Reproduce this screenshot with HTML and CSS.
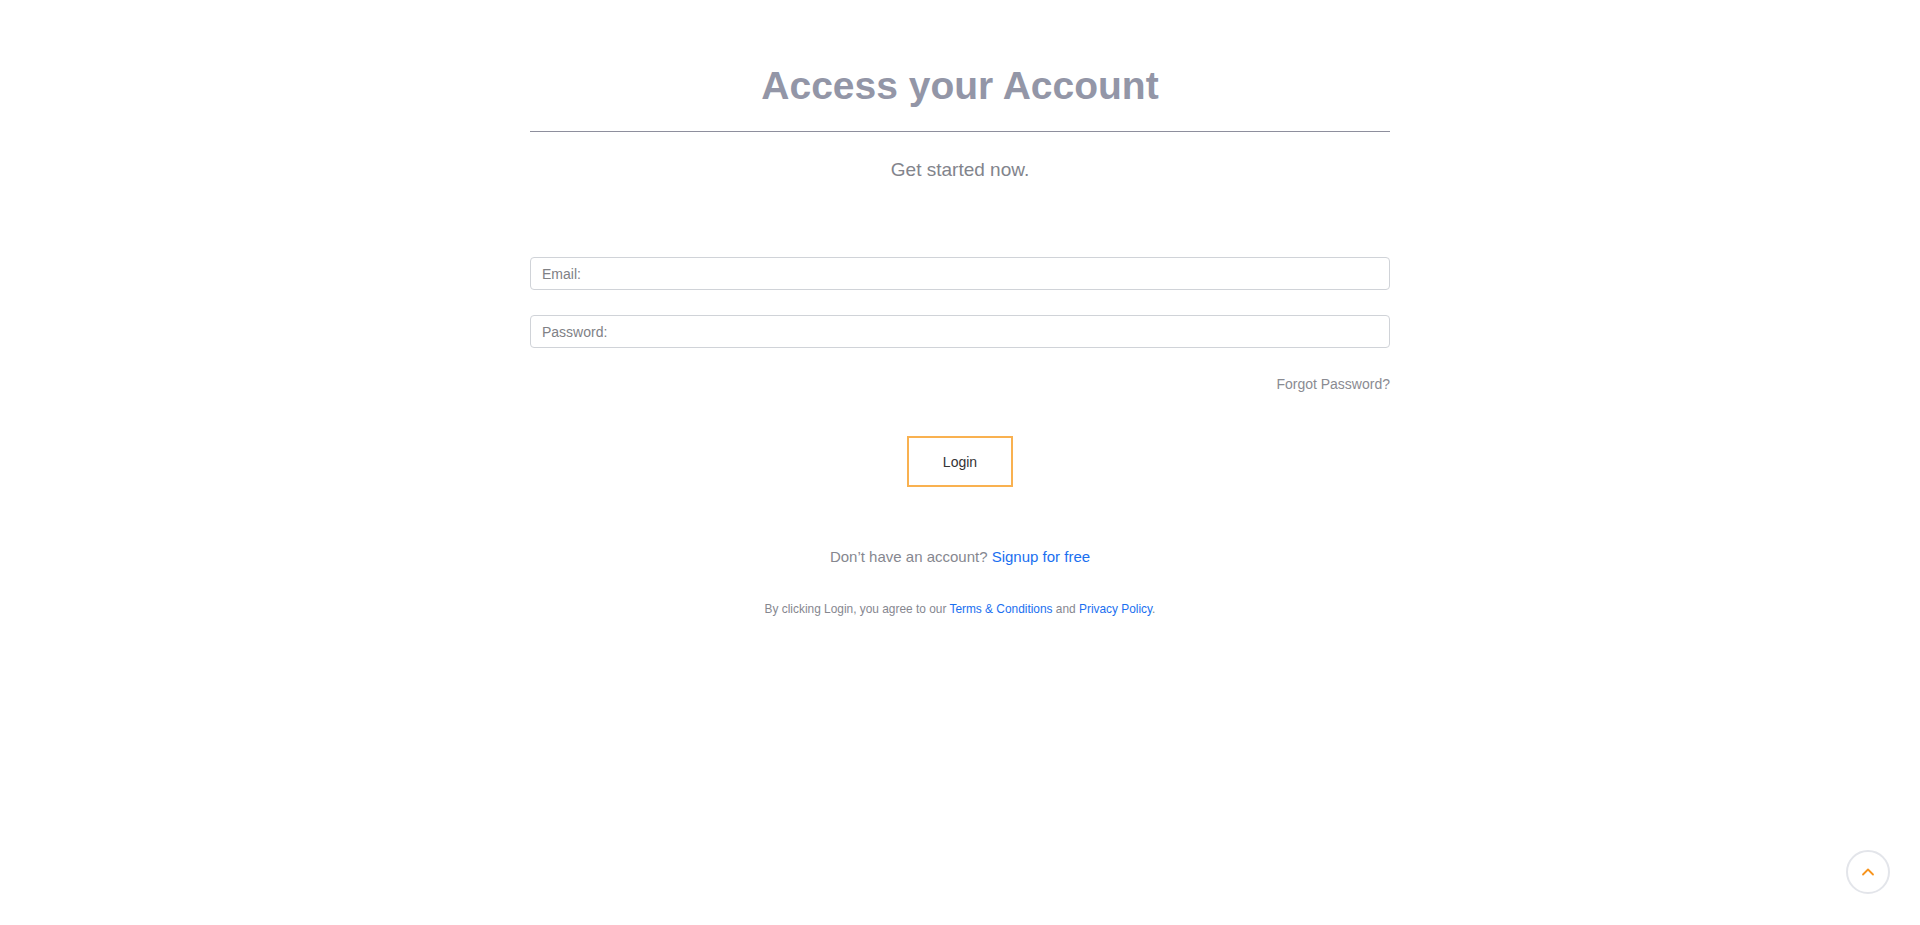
FILE: index.html
```html
<!DOCTYPE html>
<html lang="en">
<head>
<meta charset="utf-8">
<title>Access your Account</title>
<link rel="stylesheet" href="styles.css">
</head>
<body>
<main class="auth">
  <h1 class="auth-title">Access your Account</h1>
  <hr class="auth-rule">
  <p class="auth-subtitle">Get started now.</p>
  <form class="auth-form">
    <input class="auth-input" type="email" placeholder="Email:">
    <input class="auth-input auth-input-gap" type="password" placeholder="Password:">
    <div class="auth-forgot-row"><a class="auth-forgot" href="#">Forgot Password?</a></div>
    <div class="auth-btn-row"><button class="auth-btn" type="button">Login</button></div>
  </form>
  <p class="auth-signup">Don’t have an account? <a class="link" href="#">Signup for free</a></p>
  <p class="auth-terms">By clicking Login, you agree to our <a class="link" href="#">Terms &amp; Conditions</a> and <a class="link" href="#">Privacy Policy</a>.</p>
</main>
<a class="to-top" href="#" aria-label="Back to top">
  <svg width="14" height="14" viewBox="0 0 14 14"><path d="M2 9.5 L7 4.5 L12 9.5" fill="none" stroke="#f7941d" stroke-width="1.8" stroke-linecap="round" stroke-linejoin="round"/></svg>
</a>
</body>
</html>
```
FILE: styles.css
```css
* { box-sizing: border-box; }
html, body { margin: 0; padding: 0; background: #fff; }
body { font-family: "Liberation Sans", Arial, sans-serif; color: #777; }

.auth {
  width: 860px;
  margin: 0 auto;
  display: flex;
  flex-direction: column;
}

.auth-title {
  margin: 64px 0 0;
  font-size: 39px;
  line-height: 44px;
  font-weight: 700;
  color: #9396a7;
  text-align: center;
}

.auth-rule {
  margin: 23px 0 0;
  border: 0;
  border-top: 1px solid #8e8f9d;
  height: 0;
}

.auth-subtitle {
  margin: 27px 0 0;
  font-size: 19px;
  line-height: 22px;
  color: #82848c;
  text-align: center;
}

.auth-form {
  margin-top: 76px;
  display: flex;
  flex-direction: column;
}

.auth-input {
  width: 100%;
  height: 33px;
  border: 1px solid #d0d3d8;
  border-radius: 4px;
  padding: 0 11px;
  font-family: "Liberation Sans", Arial, sans-serif;
  font-size: 14px;
  color: #333;
  background: #fff;
  outline: none;
}
.auth-input::placeholder { color: #808186; opacity: 1; }
.auth-input-gap { margin-top: 25px; }

.auth-forgot-row {
  margin-top: 28px;
  display: flex;
  justify-content: flex-end;
  line-height: 16px;
}
.auth-forgot {
  font-size: 14px;
  color: #8a8b92;
  text-decoration: none;
}

.auth-btn-row {
  margin-top: 44px;
  display: flex;
  justify-content: center;
}
.auth-btn {
  width: 106px;
  height: 51px;
  border: 2px solid #f9b150;
  border-radius: 0;
  background: #fff;
  font-family: "Liberation Sans", Arial, sans-serif;
  font-size: 14px;
  color: #333;
  padding: 0;
}

.auth-signup {
  margin: 61px 0 0;
  font-size: 15px;
  line-height: 17px;
  color: #86878f;
  text-align: center;
}

.auth-terms {
  margin: 37px 0 0;
  font-size: 11.9px;
  line-height: 14px;
  color: #86878f;
  text-align: center;
}

.link { color: #1a6ff0; text-decoration: none; }

.to-top {
  position: fixed;
  right: 30px;
  bottom: 31px;
  width: 44px;
  height: 44px;
  border: 2px solid #e3e5ea;
  border-radius: 50%;
  background: #fff;
  display: flex;
  align-items: center;
  justify-content: center;
}
```
